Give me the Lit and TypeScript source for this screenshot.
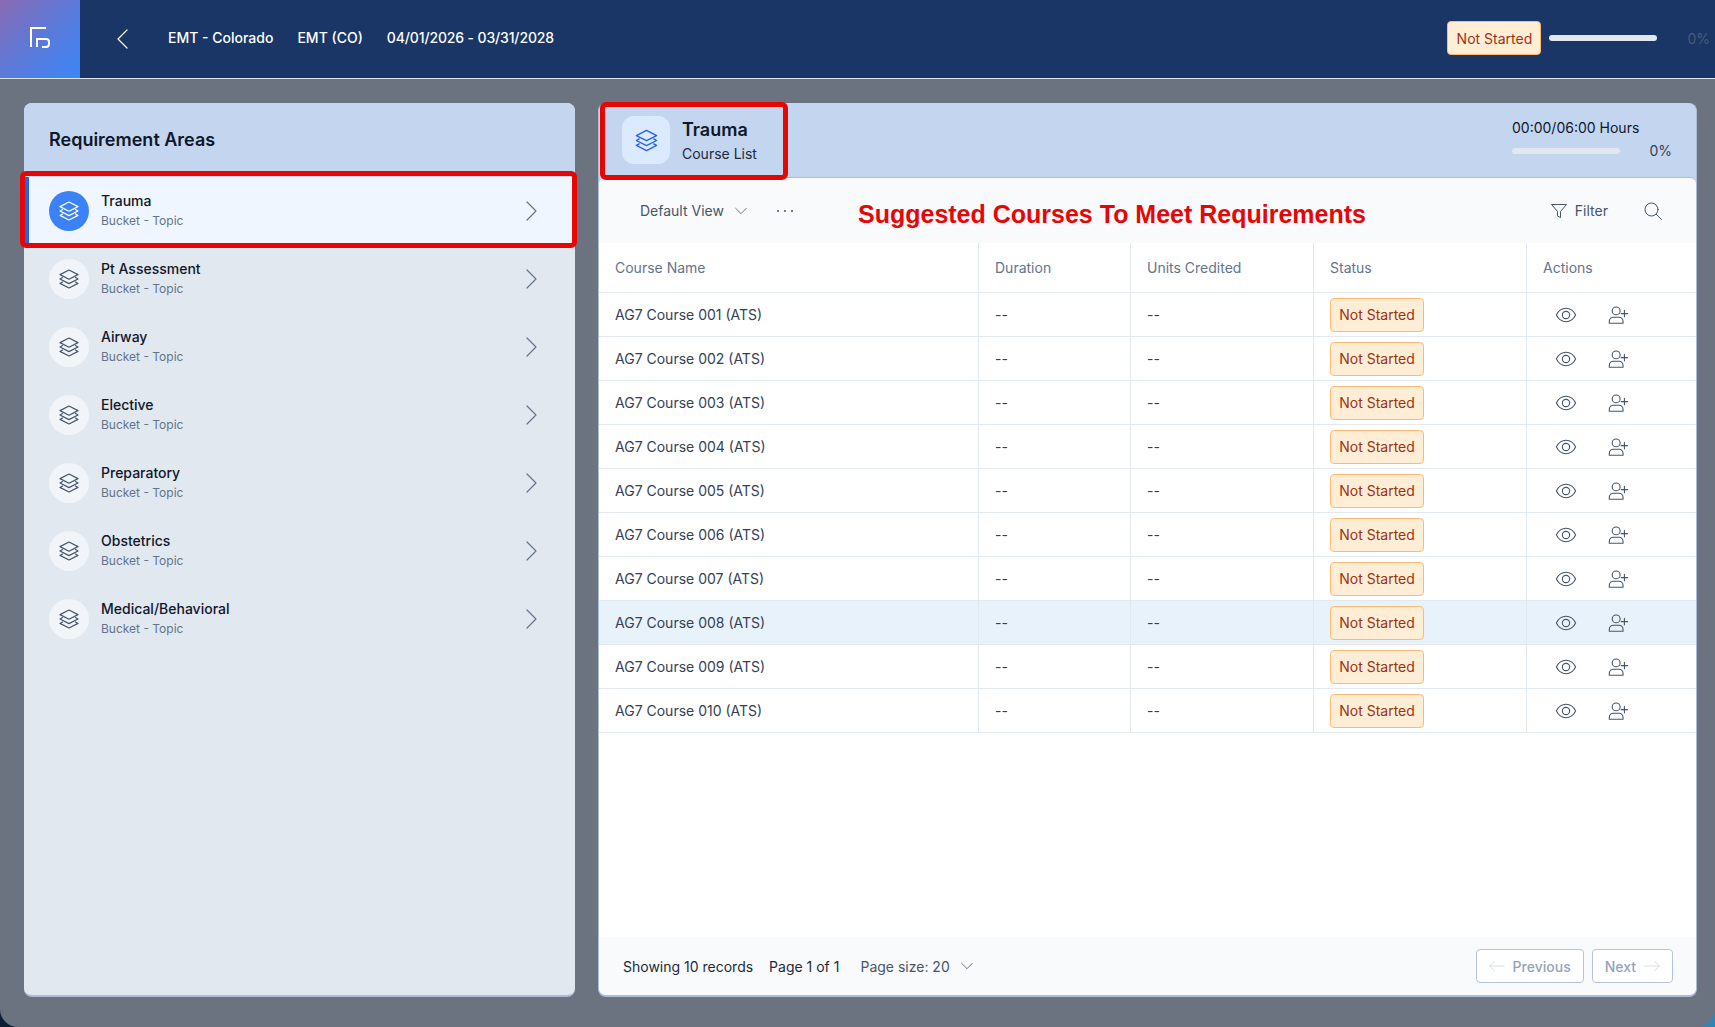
import { LitElement, css, html, svg } from "lit";
import { customElement } from "lit/decorators.js";

const areas = ["Trauma", "Pt Assessment", "Airway", "Elective", "Preparatory", "Obstetrics", "Medical/Behavioral"];
const courses = Array.from({ length: 10 }, (_, i) => `AG7 Course ${String(i + 1).padStart(3, "0")} (ATS)`);

const icon = (size: number, body: unknown, cls = "") => html`
  <svg class=${cls} width=${size} height=${size} viewBox="0 0 24 24" fill="none" stroke="currentColor"
    stroke-width="1.2" stroke-linecap="round" stroke-linejoin="round">${body}</svg>
`;

const layers = svg`
  <path d="M12 3 21 7.600 12 12.200 3 7.600Z" />
  <path d="M5.500 10.600 3 12l9 4.600 9-4.600-2.500-1.400" />
  <path d="M5.500 15 3 16.400 12 21l9-4.600L18.500 15" />
`;
const chevronRight = svg`<path d="M8 3l9 9-9 9" />`;
const chevronDown = svg`<path d="M4 8l8 8 8-8" />`;
const eye = svg`
  <path d="M1.500 12C4 7 7.500 4.700 12 4.700S20 7 22.500 12C20 17 16.500 19.300 12 19.300S4 17 1.500 12Z" />
  <circle cx="12" cy="12" r="4" />
`;
const userPlus = svg`
  <circle cx="10" cy="7.500" r="4.300" />
  <path d="M2.500 21v-2c0-2.500 2-4.500 4.500-4.500h6c2.500 0 4.500 2 4.500 4.500v2Z" />
  <path d="M19 7v7M15.500 10.500h7" />
`;

@customElement("app-root")
export class AppRoot extends LitElement {
  static styles = css`
    :host {
      display: block;
      width: 100%;
      height: 1027px;
      overflow: hidden;
      font-family: Inter, "Liberation Sans", sans-serif;
      background: linear-gradient(to right, #0f1f33 50%, #2f86b5 50%);
    }
    .page {
      height: 1027px;
      display: flex;
      flex-direction: column;
      background: #6b7280;
      border-radius: 0 0 18px 18px;
      overflow: hidden;
    }

    .top {
      height: 78px;
      flex: none;
      display: flex;
      align-items: center;
      background: #1a3667;
      border-bottom: 1px solid #dfe5ee;
      color: #fff;
      font-size: 14px;
      font-weight: 500;
    }
    .logo {
      width: 80px;
      height: 78px;
      box-sizing: border-box;
      padding-bottom: 4px;
      display: flex;
      align-items: center;
      justify-content: center;
      background: linear-gradient(135deg, #8a69b3 0%, #5f78d6 45%, #3b86f8 100%);
    }
    .back {
      margin-left: 31px;
      margin-right: 33px;
      display: flex;
    }
    .flip {
      transform: scaleX(-1);
    }
    .crumbs {
      display: flex;
      gap: 24px;
      padding-bottom: 4px;
    }
    .dates {
      letter-spacing: -0.14px;
    }
    .top-right {
      margin-left: auto;
      display: flex;
      align-items: center;
      padding: 0 5px 2px 0;
    }
    .top-right .bar {
      margin-left: 8px;
      background: #e2e8f0;
    }
    .top-pct {
      margin-left: 30px;
      font-weight: 400;
      color: #4b5b75;
    }
    .badge {
      box-sizing: border-box;
      width: 94px;
      height: 34px;
      display: flex;
      align-items: center;
      justify-content: center;
      background: #ffedd5;
      border: 1px solid #fdba74;
      border-radius: 4px;
      color: #9a3412;
      font-size: 14px;
      font-weight: 400;
    }
    .bar {
      width: 108px;
      height: 6px;
      border-radius: 3px;
      background: #e2e8f0;
    }

    .body {
      flex: 1;
      min-height: 0;
      display: flex;
      gap: 23px;
      padding: 24px 18px 30px 24px;
    }
    .areas {
      width: 551px;
      flex: none;
      box-sizing: border-box;
      background: #e2e8f0;
      border-bottom: 2px solid #aebdd4;
      border-radius: 8px;
      overflow: hidden;
    }
    .areas-title {
      height: 74px;
      box-sizing: border-box;
      padding: 25px 25px 0;
      background: #c3d5ef;
      color: #0f172a;
      font-size: 18px;
      font-weight: 600;
      line-height: 24px;
    }
    .area {
      height: 68px;
      box-sizing: border-box;
      display: flex;
      align-items: center;
      gap: 12px;
      padding: 0 32px 0 25px;
      color: #0f172a;
    }
    .area.on {
      background: #eff6ff;
      box-shadow: inset 5px 0 0 #2563eb;
    }
    .dot {
      width: 40px;
      height: 40px;
      flex: none;
      display: flex;
      align-items: center;
      justify-content: center;
      border-radius: 50%;
      background: #f1f5f9;
      color: #475569;
    }
    .on .dot {
      background: #3b82f6;
      color: #fff;
    }
    .area-name {
      font-size: 14px;
      font-weight: 500;
      line-height: 20px;
    }
    .area-sub {
      font-size: 12px;
      line-height: 20px;
      color: #64748b;
    }
    .area svg.go {
      margin-left: auto;
      color: #64748b;
    }

    .main {
      flex: 1;
      min-width: 0;
      box-sizing: border-box;
      display: flex;
      flex-direction: column;
      background: #c3d5ef;
      border: solid #aebdd4;
      border-width: 0 1px 2px;
      border-radius: 8px;
      overflow: hidden;
    }
    .main-head {
      height: 74px;
      flex: none;
      box-sizing: border-box;
      display: flex;
      align-items: center;
      padding: 0 24px 0 23px;
    }
    .tile {
      width: 48px;
      height: 48px;
      display: flex;
      align-items: center;
      justify-content: center;
      border-radius: 12px;
      background: #dbeafe;
      color: #2563eb;
    }
    .head-text {
      margin-left: 12px;
    }
    .head-title {
      font-size: 18px;
      font-weight: 600;
      line-height: 28px;
      color: #0f172a;
    }
    .head-sub {
      font-size: 14px;
      line-height: 20px;
      color: #1e293b;
    }
    .hours {
      margin-left: auto;
      width: 160px;
      padding-bottom: 2px;
      font-size: 14px;
      color: #0f172a;
    }
    .hours-label {
      line-height: 20px;
      margin-bottom: 3px;
    }
    .hours-row {
      display: flex;
      align-items: center;
      justify-content: space-between;
      margin-top: 2px;
      color: #334155;
      line-height: 20px;
    }

    .card {
      flex: 1;
      min-height: 0;
      display: flex;
      flex-direction: column;
      background: #f8fafc;
      border-top: 1px solid #aebdd0;
      border-radius: 6px 6px 0 0;
      overflow: hidden;
    }
    .tools {
      height: 65px;
      flex: none;
      box-sizing: border-box;
      display: flex;
      align-items: center;
      padding: 0 34px 0 41px;
      color: #475569;
      font-size: 14px;
    }
    .view {
      display: flex;
      align-items: center;
      gap: 9px;
    }
    .more {
      margin-left: 28px;
      display: flex;
      gap: 5px;
    }
    .more i {
      width: 2px;
      height: 2px;
      border-radius: 50%;
      background: #475569;
    }
    .filter {
      margin-left: auto;
      display: flex;
      align-items: center;
      gap: 7px;
    }
    .search {
      margin-left: 36px;
      display: flex;
    }

    .table {
      flex: 1;
      min-height: 0;
      background: #fff;
    }
    .row {
      display: grid;
      grid-template-columns: 380px 152px 183px 213px 1fr;
      height: 44px;
      box-sizing: border-box;
      border-bottom: 1px solid #e2e8f0;
      font-size: 14px;
      color: #334155;
    }
    .row.head {
      height: 50px;
      color: #64748b;
    }
    .row.hi {
      background: #e8f2fb;
    }
    .row > div {
      display: flex;
      align-items: center;
      padding-left: 16px;
      border-right: 1px solid #e2e8f0;
    }
    .row > div:last-child {
      border-right: 0;
    }
    .row .acts {
      padding-left: 28px;
      gap: 30px;
      color: #475569;
    }

    .foot {
      height: 58px;
      flex: none;
      box-sizing: border-box;
      display: flex;
      align-items: center;
      padding: 0 23px 0 24px;
      font-size: 14px;
      color: #1e293b;
    }
    .foot .pg {
      margin-left: 16px;
    }
    .foot .size {
      margin-left: 21px;
      display: flex;
      align-items: center;
      gap: 9px;
      color: #475569;
    }
    .pager {
      margin-left: auto;
      display: flex;
      gap: 8px;
    }
    .btn {
      height: 34px;
      box-sizing: border-box;
      display: flex;
      align-items: center;
      gap: 8px;
      padding: 0 12px;
      background: #fff;
      border: 1px solid #b6c3d6;
      border-radius: 4px;
      color: #94a3b8;
      font-weight: 500;
    }
    .btn svg {
      color: #cbd5e1;
    }

    .mark {
      position: absolute;
      box-sizing: border-box;
      border: 5px solid #e60606;
      border-radius: 6px;
    }
    .mark.one {
      left: 20px;
      top: 171px;
      width: 557px;
      height: 77px;
    }
    .mark.two {
      left: 600px;
      top: 102px;
      width: 188px;
      height: 78px;
    }
    .note {
      position: absolute;
      left: 858px;
      top: 199px;
      font-family: "Liberation Sans", Arial, sans-serif;
      font-size: 25px;
      font-weight: 700;
      line-height: 30px;
      color: #e60606;
      white-space: nowrap;
    }
  `;

  render() {
    return html`
      <div class="page">
        <div class="top">
          <div class="logo">
            <svg width="24" height="24" viewBox="0 0 24 24" fill="none" stroke="#fff" stroke-width="2">
              <path d="M18 3H3v19" />
              <path d="M9 22v-8h9a3 3 0 0 1 3 3v2a3 3 0 0 1-3 3h-4" />
            </svg>
          </div>
          <div class="back">${icon(24, chevronRight, "flip")}</div>
          <div class="crumbs">
            <span>EMT - Colorado</span>
            <span>EMT (CO)</span>
            <span class="dates">04/01/2026 - 03/31/2028</span>
          </div>
          <div class="top-right">
            <div class="badge">Not Started</div>
            <div class="bar"></div>
            <span class="top-pct">0%</span>
          </div>
        </div>

        <div class="body">
          <div class="areas">
            <div class="areas-title">Requirement Areas</div>
            ${areas.map((name, i) => html`
              <div class="area ${i === 0 ? "on" : ""}">
                <div class="dot">${icon(24, layers)}</div>
                <div>
                  <div class="area-name">${name}</div>
                  <div class="area-sub">Bucket - Topic</div>
                </div>
                ${icon(24, chevronRight, "go")}
              </div>
            `)}
          </div>

          <div class="main">
            <div class="main-head">
              <div class="tile">${icon(27, layers)}</div>
              <div class="head-text">
                <div class="head-title">Trauma</div>
                <div class="head-sub">Course List</div>
              </div>
              <div class="hours">
                <div class="hours-label">00:00/06:00 Hours</div>
                <div class="hours-row"><div class="bar"></div><span>0%</span></div>
              </div>
            </div>

            <div class="card">
              <div class="tools">
                <div class="view">Default View ${icon(16, chevronDown)}</div>
                <div class="more"><i></i><i></i><i></i></div>
                <div class="filter">
                  <svg width="18" height="18" viewBox="0 0 18 18" fill="none" stroke="currentColor" stroke-width="1" stroke-linejoin="round">
                    <path d="M1.500 2.500h15L10.500 9.500v6l-3-1.500V9.500Z" />
                  </svg>
                  Filter
                </div>
                <div class="search">
                  <svg width="18" height="18" viewBox="0 0 18 18" fill="none" stroke="currentColor" stroke-width="1" stroke-linecap="round">
                    <circle cx="7.500" cy="7.500" r="6.500" />
                    <path d="M12.300 12.300 17.500 17.500" />
                  </svg>
                </div>
              </div>

              <div class="table">
                <div class="row head">
                  <div>Course Name</div><div>Duration</div><div>Units Credited</div><div>Status</div><div>Actions</div>
                </div>
                ${courses.map((c, i) => html`
                  <div class="row ${i === 7 ? "hi" : ""}">
                    <div>${c}</div>
                    <div>--</div>
                    <div>--</div>
                    <div><div class="badge">Not Started</div></div>
                    <div class="acts">${icon(22, eye)}${icon(22, userPlus)}</div>
                  </div>
                `)}
              </div>

              <div class="foot">
                <span>Showing 10 records</span>
                <span class="pg">Page 1 of 1</span>
                <span class="size">Page size: 20 ${icon(16, chevronDown)}</span>
                <div class="pager">
                  <div class="btn">
                    ${icon(16, svg`<path d="M23 12H1M8 5l-7 7 7 7" />`)}
                    Previous
                  </div>
                  <div class="btn">
                    Next
                    ${icon(16, svg`<path d="M1 12h22M16 5l7 7-7 7" />`)}
                  </div>
                </div>
              </div>
            </div>
          </div>
        </div>
      </div>
      <div class="mark one"></div>
      <div class="mark two"></div>
      <div class="note">Suggested Courses To Meet Requirements</div>
    `;
  }
}
